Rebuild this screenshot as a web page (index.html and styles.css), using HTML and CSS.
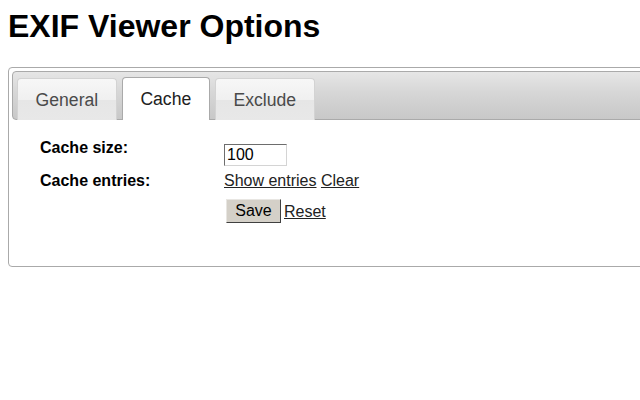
FILE: index.html
```html
<!DOCTYPE html>
<html>
<head>
<meta charset="utf-8">
<title>EXIF Viewer Options</title>
<link rel="stylesheet" href="styles.css">
</head>
<body>
<h1 class="title">EXIF Viewer Options</h1>
<div class="tabs">
  <div class="nav">
    <a class="tab">General</a>
    <a class="tab active">Cache</a>
    <a class="tab">Exclude</a>
  </div>
  <div class="panel">
    <div class="form">
      <div class="label">Cache size:</div>
      <div class="value first"><input class="field" type="text" value="100"></div>
      <div class="label second">Cache entries:</div>
      <div class="value second"><a class="link" href="#">Show entries</a> <a class="link" href="#">Clear</a></div>
      <div class="label third"></div>
      <div class="value third"><button class="btn">Save</button><a class="link reset" href="#">Reset</a></div>
    </div>
  </div>
</div>
</body>
</html>
```

FILE: styles.css
```css
html {
  overflow: hidden;
}
body {
  margin: 8px;
  font-family: "Liberation Sans", Arial, sans-serif;
  color: #000;
  background: #fff;
  width: 800px;
}
.title {
  margin: 0 0 22px 0;
  font-size: 32px;
  line-height: 37px;
  font-weight: bold;
}
.tabs {
  border: 1px solid #aaa;
  border-radius: 4px;
  padding: 3px;
}
.nav {
  display: flex;
  align-items: flex-end;
  height: 49px;
  box-sizing: border-box;
  padding: 5px 4px 0 4px;
  border: 1px solid #aaa;
  border-radius: 4px;
  background: linear-gradient(#e6e6e6, #d6d6d6 45%, #c8c8c8);
  gap: 5px;
}
.tab {
  display: block;
  box-sizing: border-box;
  height: 42px;
  padding: 11px 17.6px 9px;
  font-size: 17.6px;
  line-height: 20px;
  color: #4a4a4a;
  border: 1px solid #d3d3d3;
  border-bottom: none;
  border-radius: 4px 4px 0 0;
  background: linear-gradient(#f7f7f7, #f0f0f0 50%, #e6e6e6 52%, #e8e8e8);
  margin-bottom: -1px;
  text-decoration: none;
  cursor: pointer;
}
.tab.active {
  height: 43px;
  background: #fff;
  border-color: #aaa;
  color: #212121;
  margin-bottom: -1px;
}
.panel {
  padding: 19px 0 40px 28px;
}
.form {
  display: grid;
  grid-template-columns: 184px auto;
  align-items: start;
  font-size: 16px;
  line-height: 18px;
}
.label {
  font-weight: bold;
  color: #000;
}
.value.first {
  margin-top: 5px;
  height: 22px;
}
.second {
  margin-top: 6px;
}
.third {
  margin-top: 9px;
}
.value.third {
  display: flex;
  align-items: flex-end;
}
.field {
  box-sizing: border-box;
  width: 63px;
  height: 22px;
  margin: 0;
  padding: 0 2px;
  font-family: "Liberation Sans", Arial, sans-serif;
  font-size: 16px;
  color: #000;
  border: 1px solid;
  border-color: #6d6d6d #d4d4d4 #d4d4d4 #6d6d6d;
  background: #fff;
}
.link {
  color: #222;
  text-decoration: underline;
}
.btn {
  box-sizing: border-box;
  margin: 0 0 0 2px;
  width: 55px;
  height: 24px;
  padding: 0;
  font-family: "Liberation Sans", Arial, sans-serif;
  font-size: 16px;
  line-height: 20px;
  color: #000;
  background: #d4d0c8;
  border: 1px solid;
  border-color: #e8e6e2 #404040 #404040 #e8e6e2;
}
.reset {
  margin-left: 3px;
  line-height: 18px;
  padding-bottom: 2px;
}
```
